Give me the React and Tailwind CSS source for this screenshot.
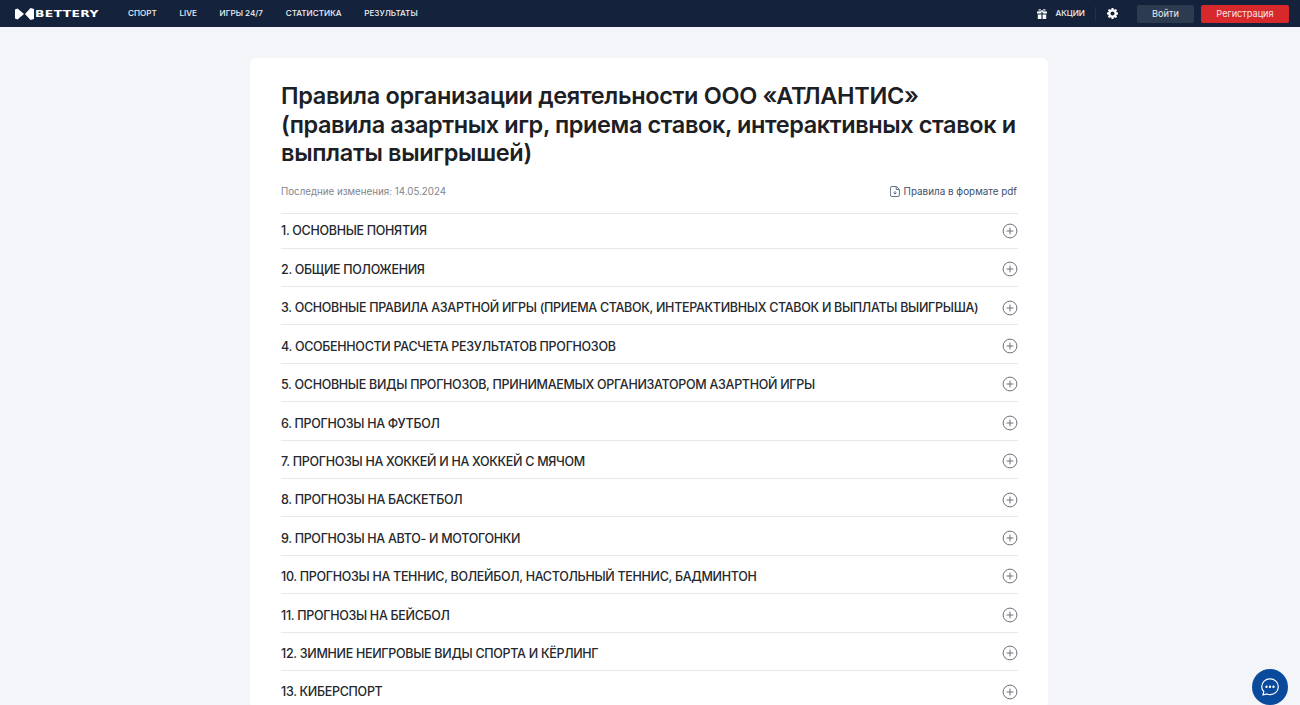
import React from "react";

const rows = [
  "1. ОСНОВНЫЕ ПОНЯТИЯ",
  "2. ОБЩИЕ ПОЛОЖЕНИЯ",
  "3. ОСНОВНЫЕ ПРАВИЛА АЗАРТНОЙ ИГРЫ (ПРИЕМА СТАВОК, ИНТЕРАКТИВНЫХ СТАВОК И ВЫПЛАТЫ ВЫИГРЫША)",
  "4. ОСОБЕННОСТИ РАСЧЕТА РЕЗУЛЬТАТОВ ПРОГНОЗОВ",
  "5. ОСНОВНЫЕ ВИДЫ ПРОГНОЗОВ, ПРИНИМАЕМЫХ ОРГАНИЗАТОРОМ АЗАРТНОЙ ИГРЫ",
  "6. ПРОГНОЗЫ НА ФУТБОЛ",
  "7. ПРОГНОЗЫ НА ХОККЕЙ И НА ХОККЕЙ С МЯЧОМ",
  "8. ПРОГНОЗЫ НА БАСКЕТБОЛ",
  "9. ПРОГНОЗЫ НА АВТО- И МОТОГОНКИ",
  "10. ПРОГНОЗЫ НА ТЕННИС, ВОЛЕЙБОЛ, НАСТОЛЬНЫЙ ТЕННИС, БАДМИНТОН",
  "11. ПРОГНОЗЫ НА БЕЙСБОЛ",
  "12. ЗИМНИЕ НЕИГРОВЫЕ ВИДЫ СПОРТА И КЁРЛИНГ",
  "13. КИБЕРСПОРТ",
];

const nav = ["СПОРТ", "LIVE", "ИГРЫ 24/7", "СТАТИСТИКА", "РЕЗУЛЬТАТЫ"];

function Plus() {
  return (
    <svg width="16" height="16" viewBox="0 0 16 16" fill="none" stroke="#6b7075" strokeWidth="1" className="shrink-0 mr-[0.5px]">
      <circle cx="8" cy="8" r="6.9" />
      <path d="M8 4.6v6.8M4.6 8h6.8" />
    </svg>
  );
}

export default function App() {
  return (
    <div className="h-[705px] overflow-hidden bg-[#f3f5f8] font-['Inter',sans-serif] relative">
      <header className="h-[27px] bg-[#14233b] flex items-center pl-[15px] pr-[11px] text-white">
        <div className="flex items-center w-[113px]">
          <svg width="19" height="12" viewBox="0 0 19 12" fill="#fff" className="shrink-0">
            <path d="M0 1.500 L2.500 0.500 L9 6 L2.500 11.500 L0 10.500 Z" />
            <path d="M19 1 V11 L15.500 12 L10 6 L15.500 0 Z" />
          </svg>
          <span className="ml-[1px] origin-left scale-x-[1.3] text-[9.5px] leading-none font-bold tracking-[0.3px] font-['DejaVu_Sans',sans-serif]">BETTERY</span>
        </div>
        <nav className="flex items-center gap-[22.7px] text-[8.15px] leading-none font-medium text-[#eef1f5]">
          {nav.map((n) => (
            <span key={n}>{n}</span>
          ))}
        </nav>
        <div className="ml-auto flex items-center">
          <svg width="10" height="10" viewBox="0 0 10 10" fill="#fff" className="mr-[8px]">
            <path d="M0 2.500h4.400v2H0zM5.600 2.500H10v2H5.600zM.8 5.400h3.600V10H.8zM5.600 5.400h3.600V10H5.600z" />
            <path d="M5 2.400C3.800.2 2.200-.3 1.800.8 1.500 1.800 3.200 2.400 5 2.400zM5 2.400C6.200.2 7.800-.3 8.200.8 8.500 1.800 6.800 2.400 5 2.400z" fill="none" stroke="#fff" strokeWidth=".9" />
          </svg>
          <span className="text-[8.15px] leading-none font-medium text-[#eef1f5]">АКЦИИ</span>
          <div className="w-px h-[14px] bg-[#22324b] ml-[10px] mr-[11px]" />
          <svg width="11" height="11" viewBox="0 0 24 24" fill="#fff" className="mr-[19px]">
            <path fillRule="evenodd" d="M10 1h4l.6 3.100 1.900.8L19.200 3 22 5.800l-1.900 2.700.8 1.900L24 11v4l-3.100.6-.8 1.900L22 20.200 19.200 23l-2.700-1.900-1.900.8L14 25h-4l-.6-3.100-1.900-.8L4.800 23 2 20.200l1.900-2.700-.8-1.900L0 15v-4l3.100-.6.8-1.900L2 5.800 4.800 3l2.700 1.900 1.900-.8zM12 8.500a4.500 4.500 0 1 0 0 9 4.500 4.500 0 0 0 0-9z" transform="translate(0 -1)" />
          </svg>
          <button className="w-[57px] h-[18px] rounded-[2px] bg-[#2d3b51] text-[9.2px] leading-none text-[#e8ebef]">Войти</button>
          <button className="w-[88px] h-[18px] rounded-[2px] bg-[#d7282b] text-[9.2px] leading-none text-[#f6e5e5] ml-[7px]">Регистрация</button>
        </div>
      </header>

      <main className="w-[798px] ml-[250px] mt-[31px] bg-white rounded-[6px] pl-[31px] pr-[30px] pt-[24px]">
        <h1 className="text-[23.5px] tracking-[-0.33px] leading-[28.5px] font-semibold text-[#1c2024] whitespace-nowrap">
          Правила организации деятельности ООО «АТЛАНТИС»
          <br />
          <span className="tracking-[-0.4px]">(правила азартных игр, приема ставок, интерактивных ставок и</span>
          <br />
          выплаты выигрышей)
        </h1>
        <div className="flex items-center justify-between mt-[17px] h-[14px] pr-px">
          <span className="text-[9.75px] leading-none text-[#80858b]">Последние изменения: 14.05.2024</span>
          <span className="flex items-center text-[9.9px] leading-none text-[#3f4f66]">
            <svg width="10" height="11" viewBox="0 0 10 11" fill="none" stroke="#3f4f66" strokeWidth=".8" className="mr-[4px]">
              <path d="M1.900.5h4.500l3 3v5.500a1.500 1.500 0 0 1-1.500 1.500h-6a1.500 1.500 0 0 1-1.500-1.500v-7a1.500 1.500 0 0 1 1.500-1.500z" />
              <path d="M6.200.5v3h3M5 5v3M3.500 6.800 5 8.200l1.500-1.400" />
            </svg>
            Правила в формате pdf
          </span>
        </div>
        <div className="mt-[14px]">
          {rows.map((r, i) => (
            <div
              key={r}
              className={`flex items-center justify-between border-t border-[#e6e8eb] ${i === 0 ? "h-[35px]" : "h-[38.42px] pt-[4px]"}`}
            >
              <span className="mt-[2px] text-[12.5px] tracking-[-0.3px] leading-none font-medium text-[#24282c] whitespace-nowrap">{r}</span>
              <Plus />
            </div>
          ))}
        </div>
      </main>

      <div className="absolute left-[1252px] top-[669px] w-9 h-9 rounded-full bg-[#0a4a9c] flex items-center justify-center">
        <svg width="20" height="20" viewBox="0 0 20 20" fill="none" stroke="#fff" strokeWidth="1.200">
          <path d="M10 1.800c4.700 0 8.300 3.400 8.300 7.900s-3.600 7.900-8.300 7.900c-1.100 0-2.200-.2-3.100-.6L3 18l.8-3.500C2.500 13.200 1.700 11.500 1.700 9.700 1.700 5.200 5.300 1.800 10 1.800z" />
          <circle cx="6.500" cy="9.700" r=".6" fill="#fff" />
          <circle cx="10" cy="9.700" r=".6" fill="#fff" />
          <circle cx="13.500" cy="9.700" r=".6" fill="#fff" />
        </svg>
      </div>
    </div>
  );
}
